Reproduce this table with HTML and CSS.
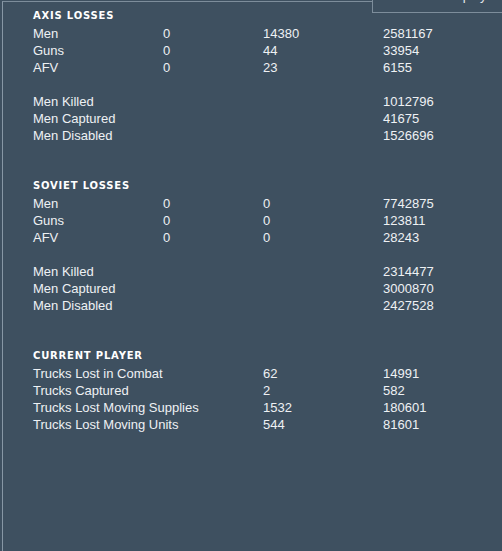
FILE: index.html
```html
<!DOCTYPE html>
<html>
<head>
<meta charset="utf-8">
<link rel="stylesheet" href="styles.css">
</head>
<body>
<div class="frame">
  <section class="section">
    <h2 class="heading">Axis Losses</h2>
    <div class="grid">
      <span>Men</span><span>0</span><span>14380</span><span>2581167</span>
      <span>Guns</span><span>0</span><span>44</span><span>33954</span>
      <span>AFV</span><span>0</span><span>23</span><span>6155</span>
      <span class="blank"></span>
      <span>Men Killed</span><span></span><span></span><span>1012796</span>
      <span>Men Captured</span><span></span><span></span><span>41675</span>
      <span>Men Disabled</span><span></span><span></span><span>1526696</span>
    </div>
  </section>
  <section class="section">
    <h2 class="heading">Soviet Losses</h2>
    <div class="grid">
      <span>Men</span><span>0</span><span>0</span><span>7742875</span>
      <span>Guns</span><span>0</span><span>0</span><span>123811</span>
      <span>AFV</span><span>0</span><span>0</span><span>28243</span>
      <span class="blank"></span>
      <span>Men Killed</span><span></span><span></span><span>2314477</span>
      <span>Men Captured</span><span></span><span></span><span>3000870</span>
      <span>Men Disabled</span><span></span><span></span><span>2427528</span>
    </div>
  </section>
  <section class="section">
    <h2 class="heading">Current Player</h2>
    <div class="grid">
      <span>Trucks Lost in Combat</span><span></span><span>62</span><span>14991</span>
      <span>Trucks Captured</span><span></span><span>2</span><span>582</span>
      <span>Trucks Lost Moving Supplies</span><span></span><span>1532</span><span>180601</span>
      <span>Trucks Lost Moving Units</span><span></span><span>544</span><span>81601</span>
    </div>
  </section>
</div>
<div class="tab"><span class="tab-label">Display</span></div>
</body>
</html>
```
FILE: styles.css
```css
html, body {
  margin: 0;
  padding: 0;
}
body {
  position: relative;
  width: 502px;
  height: 551px;
  overflow: hidden;
  background: #3e5060;
  font-family: "Liberation Sans", Arial, sans-serif;
  font-size: 13px;
  color: #eef1f4;
}
.frame {
  box-sizing: border-box;
  height: 550px;
  margin: 1px 0 0 2px;
  border-left: 1px solid #8797a5;
  border-top: 1px solid #7d8d9b;
  padding: 5px 0 0 30px;
  display: flex;
  flex-direction: column;
  gap: 33px;
}
.heading {
  margin: 0 0 1px 0;
  font-family: "DejaVu Sans", Verdana, sans-serif;
  font-weight: bold;
  font-size: 10px;
  letter-spacing: 0.8px;
  line-height: 17px;
  text-transform: uppercase;
  color: #ffffff;
}
.grid {
  display: grid;
  grid-template-columns: 130px 100px 120px 1fr;
  grid-auto-rows: 17px;
  line-height: 17px;
  white-space: nowrap;
}
.blank {
  grid-column: 1 / -1;
}
.tab {
  position: absolute;
  left: 372px;
  top: 0;
  width: 130px;
  height: 12px;
  background: #3e5060;
  border-left: 1px solid #7d8d9b;
  border-bottom: 1px solid #7d8d9b;
  overflow: hidden;
}
.tab-label {
  display: block;
  margin: -11px 0 0 71px;
  line-height: 13px;
  color: #e4e8eb;
}
```
